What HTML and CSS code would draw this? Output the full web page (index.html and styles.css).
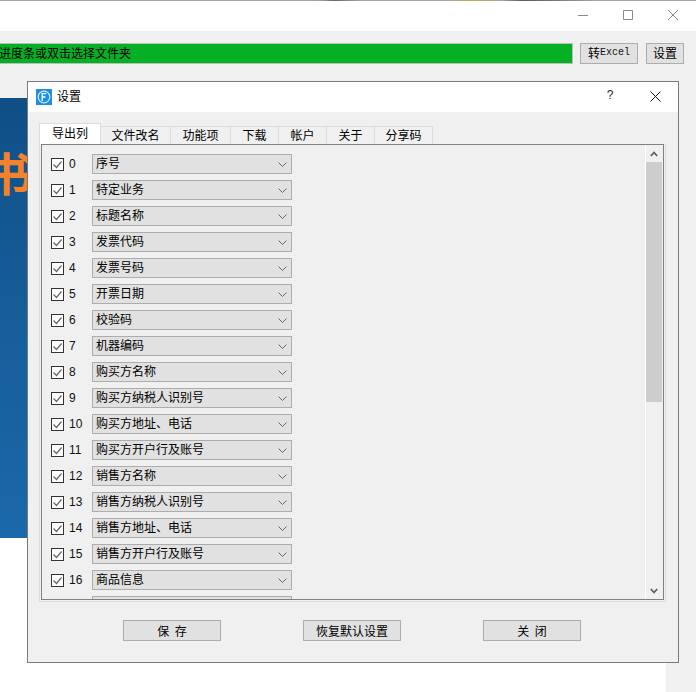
FILE: index.html
```html
<!DOCTYPE html>
<html lang="zh-CN">
<head>
<meta charset="utf-8">
<title>设置</title>
<link rel="stylesheet" href="styles.css">
</head>
<body>
<div class="app">
  <header class="titlebar">
    <div class="photo-edge"></div>
    <div class="win-controls">
      <svg class="win-icon" viewBox="0 0 10 10"><path d="M0 5.5H10"/></svg>
      <svg class="win-icon" viewBox="0 0 10 10"><path d="M.5.5h9v9h-9z"/></svg>
      <svg class="win-icon" viewBox="0 0 10 10"><path d="M0 0L10 10M10 0L0 10"/></svg>
    </div>
  </header>
  <div class="toolbar">
    <div class="progress"><span class="progress-text">进度条或双击选择文件夹</span></div>
    <button class="btn btn-excel">转<span class="latin">Excel</span></button>
    <button class="btn btn-set">设置</button>
  </div>
  <div class="stage">
    <div class="banner"><span class="banner-text">书</span></div>
  </div>
</div>

<section class="dialog">
  <div class="dlg-title">
    <svg class="dlg-logo" viewBox="0 0 16 16">
      <rect width="16" height="16" fill="#1a8fe8"/>
      <circle cx="8" cy="8" r="5.8" fill="none" stroke="#d8ecfb" stroke-width="1.2"/>
      <path d="M6.2 12V4.6h4M6.2 8h3.2" fill="none" stroke="#fff" stroke-width="1.3"/>
    </svg>
    <span class="dlg-name">设置</span>
    <span class="dlg-help">?</span>
    <svg class="dlg-close" viewBox="0 0 11 11"><path d="M.5.5L10.5 10.5M10.5.5L.5 10.5"/></svg>
  </div>
  <div class="dlg-body">
    <nav class="tabs">
      <div class="tab active">导出列</div>
      <div class="tab t-w">文件改名</div>
      <div class="tab t-m">功能项</div>
      <div class="tab t-s">下载</div>
      <div class="tab t-s">帐户</div>
      <div class="tab t-s">关于</div>
      <div class="tab t-m2">分享码</div>
    </nav>
    <div class="pane-frame">
      <div class="pane">
        <div class="rows">
          <div class="row"><span class="cb"><svg viewBox="0 0 13 13"><path d="M2.5 6.5l3 3 5-6"/></svg></span><span class="num">0</span><div class="select">序号<svg class="chev" viewBox="0 0 9 5"><path d="M.5.5l4 4 4-4"/></svg></div></div>
          <div class="row"><span class="cb"><svg viewBox="0 0 13 13"><path d="M2.5 6.5l3 3 5-6"/></svg></span><span class="num">1</span><div class="select">特定业务<svg class="chev" viewBox="0 0 9 5"><path d="M.5.5l4 4 4-4"/></svg></div></div>
          <div class="row"><span class="cb"><svg viewBox="0 0 13 13"><path d="M2.5 6.5l3 3 5-6"/></svg></span><span class="num">2</span><div class="select">标题名称<svg class="chev" viewBox="0 0 9 5"><path d="M.5.5l4 4 4-4"/></svg></div></div>
          <div class="row"><span class="cb"><svg viewBox="0 0 13 13"><path d="M2.5 6.5l3 3 5-6"/></svg></span><span class="num">3</span><div class="select">发票代码<svg class="chev" viewBox="0 0 9 5"><path d="M.5.5l4 4 4-4"/></svg></div></div>
          <div class="row"><span class="cb"><svg viewBox="0 0 13 13"><path d="M2.5 6.5l3 3 5-6"/></svg></span><span class="num">4</span><div class="select">发票号码<svg class="chev" viewBox="0 0 9 5"><path d="M.5.5l4 4 4-4"/></svg></div></div>
          <div class="row"><span class="cb"><svg viewBox="0 0 13 13"><path d="M2.5 6.5l3 3 5-6"/></svg></span><span class="num">5</span><div class="select">开票日期<svg class="chev" viewBox="0 0 9 5"><path d="M.5.5l4 4 4-4"/></svg></div></div>
          <div class="row"><span class="cb"><svg viewBox="0 0 13 13"><path d="M2.5 6.5l3 3 5-6"/></svg></span><span class="num">6</span><div class="select">校验码<svg class="chev" viewBox="0 0 9 5"><path d="M.5.5l4 4 4-4"/></svg></div></div>
          <div class="row"><span class="cb"><svg viewBox="0 0 13 13"><path d="M2.5 6.5l3 3 5-6"/></svg></span><span class="num">7</span><div class="select">机器编码<svg class="chev" viewBox="0 0 9 5"><path d="M.5.5l4 4 4-4"/></svg></div></div>
          <div class="row"><span class="cb"><svg viewBox="0 0 13 13"><path d="M2.5 6.5l3 3 5-6"/></svg></span><span class="num">8</span><div class="select">购买方名称<svg class="chev" viewBox="0 0 9 5"><path d="M.5.5l4 4 4-4"/></svg></div></div>
          <div class="row"><span class="cb"><svg viewBox="0 0 13 13"><path d="M2.5 6.5l3 3 5-6"/></svg></span><span class="num">9</span><div class="select">购买方纳税人识别号<svg class="chev" viewBox="0 0 9 5"><path d="M.5.5l4 4 4-4"/></svg></div></div>
          <div class="row"><span class="cb"><svg viewBox="0 0 13 13"><path d="M2.5 6.5l3 3 5-6"/></svg></span><span class="num">10</span><div class="select">购买方地址、电话<svg class="chev" viewBox="0 0 9 5"><path d="M.5.5l4 4 4-4"/></svg></div></div>
          <div class="row"><span class="cb"><svg viewBox="0 0 13 13"><path d="M2.5 6.5l3 3 5-6"/></svg></span><span class="num">11</span><div class="select">购买方开户行及账号<svg class="chev" viewBox="0 0 9 5"><path d="M.5.5l4 4 4-4"/></svg></div></div>
          <div class="row"><span class="cb"><svg viewBox="0 0 13 13"><path d="M2.5 6.5l3 3 5-6"/></svg></span><span class="num">12</span><div class="select">销售方名称<svg class="chev" viewBox="0 0 9 5"><path d="M.5.5l4 4 4-4"/></svg></div></div>
          <div class="row"><span class="cb"><svg viewBox="0 0 13 13"><path d="M2.5 6.5l3 3 5-6"/></svg></span><span class="num">13</span><div class="select">销售方纳税人识别号<svg class="chev" viewBox="0 0 9 5"><path d="M.5.5l4 4 4-4"/></svg></div></div>
          <div class="row"><span class="cb"><svg viewBox="0 0 13 13"><path d="M2.5 6.5l3 3 5-6"/></svg></span><span class="num">14</span><div class="select">销售方地址、电话<svg class="chev" viewBox="0 0 9 5"><path d="M.5.5l4 4 4-4"/></svg></div></div>
          <div class="row"><span class="cb"><svg viewBox="0 0 13 13"><path d="M2.5 6.5l3 3 5-6"/></svg></span><span class="num">15</span><div class="select">销售方开户行及账号<svg class="chev" viewBox="0 0 9 5"><path d="M.5.5l4 4 4-4"/></svg></div></div>
          <div class="row"><span class="cb"><svg viewBox="0 0 13 13"><path d="M2.5 6.5l3 3 5-6"/></svg></span><span class="num">16</span><div class="select">商品信息<svg class="chev" viewBox="0 0 9 5"><path d="M.5.5l4 4 4-4"/></svg></div></div>
          <div class="row"><span class="cb"></span><span class="num"></span><div class="select"></div></div>
        </div>
        <div class="scrollbar">
          <svg class="sb-arrow" viewBox="0 0 8 6"><path d="M.8 5L4 1.5 7.2 5"/></svg>
          <div class="sb-track"><div class="sb-thumb"></div></div>
          <svg class="sb-arrow" viewBox="0 0 8 6"><path d="M.8 1L4 4.5 7.2 1"/></svg>
        </div>
      </div>
    </div>
    <div class="dlg-actions">
      <button class="btn act act-spaced">保 存</button>
      <button class="btn act">恢复默认设置</button>
      <button class="btn act act-spaced">关 闭</button>
    </div>
  </div>
</section>
</body>
</html>
```

FILE: styles.css
```css
* { box-sizing: border-box; }
html, body { margin: 0; padding: 0; }
body {
  width: 696px; height: 692px; overflow: hidden; position: relative;
  font: 12px/16px "Noto Sans CJK SC", "Liberation Sans", sans-serif;
  color: #000; background: #f0f0f0;
}
.app { height: 692px; display: flex; flex-direction: column; }
.titlebar { height: 31px; background: #fff; position: relative; }
.photo-edge {
  height: 1px;
  background: linear-gradient(90deg, #a6a6a6 0 44%, #a59f90 46%, #6f6a60 48%, #a6a6a6 52%, #a3a7ad 58%, #a6a6a6 64%, #c2aa62 67%, #b9a666 70%, #a6a6a6 72%, #5c5a55 75%, #7e7a70 80%, #a6a6a6 86%, #a6a6a6 100%);
}
.win-controls { position: absolute; right: 18px; top: 10px; display: flex; gap: 35px; }
.win-icon { width: 10px; height: 10px; fill: none; stroke: #8a8a8a; stroke-width: 1; display: block; }
.toolbar { height: 67px; padding-top: 12px; display: flex; align-items: flex-start; background: #f0f0f0; }
.progress {
  width: 573px; height: 21px; background: #06b025;
  border: 1px solid #bcbcbc; border-left: 0;
  line-height: 18px; white-space: nowrap; overflow: hidden;
  margin-right: 7px;
}
.progress-text { margin-left: -1px; display: block; }
.btn {
  font: inherit; color: #000; background: #e1e1e1;
  border: 1px solid #adadad; padding: 0 0 2px; border-radius: 0;
  display: flex; align-items: center; justify-content: center;
}
.btn-excel { width: 58px; height: 21px; margin-right: 8px; }
.btn-set { width: 38px; height: 21px; }
.latin { font: 10px/16px "Liberation Mono", monospace; color: #111; }
.stage { flex: 1; margin-right: 30px; background: #fff; }
.banner {
  height: 440px; width: 40px; position: relative; overflow: hidden;
  background: linear-gradient(180deg, #0f4f86 0%, #165c99 45%, #1b68aa 100%);
}
.banner-text {
  position: absolute; left: -14px; top: 41px;
  font: 700 46px/64px "Noto Sans CJK SC", sans-serif; color: #f5822a;
}
.dialog {
  position: absolute; left: 27px; top: 81px; width: 652px; height: 582px;
  border: 1px solid #7a7a7a; background: #f0f0f0;
  display: flex; flex-direction: column;
}
.dlg-title { height: 30px; background: #fff; display: flex; align-items: center; padding: 0 17px 2px 8px; flex: none; }
.dlg-logo { width: 16px; height: 16px; margin: 2px 5px 0 0; }
.dlg-name { flex: 1; }
.dlg-help { font: 12px/16px "Liberation Mono", monospace; color: #222; margin-right: 36px; }
.dlg-close { width: 11px; height: 11px; fill: none; stroke: #111; stroke-width: 1; }
.dlg-body { flex: 1; padding: 11px 11px 0 11px; display: flex; flex-direction: column; }
.tabs { display: flex; height: 21px; align-items: flex-end; flex: none; }
.tab {
  height: 18px; border: 1px solid #dcdcdc; border-bottom: 0; border-left: 0;
  display: flex; align-items: center; justify-content: center; background: #f0f0f0;
  padding-bottom: 2px;
}
.tab.active { width: 62px; height: 21px; background: #fff; border-left: 1px solid #dcdcdc; padding-bottom: 3px; }
.t-w { width: 70px; }
.t-m { width: 60px; }
.t-s { width: 48px; }
.t-m2 { width: 58px; }
.pane-frame { width: 627px; height: 458px; border: 1px solid #dcdcdc; border-top: 0; padding: 0 1px 1px 1px; flex: none; }
.pane { height: 456px; border: 1px solid #7f7f86; display: flex; overflow: hidden; background: #f0f0f0; }
.rows { flex: 1; padding: 9px 0 0 9px; display: flex; flex-direction: column; gap: 6px; overflow: hidden; }
.row { display: flex; align-items: center; height: 20px; flex: none; }
.cb { width: 13px; height: 13px; border: 1px solid #333; background: #fff; flex: none; margin-right: 5px; position: relative; }
.cb:empty { visibility: hidden; }
.cb svg { position: absolute; left: -1px; top: -1px; width: 13px; height: 13px; fill: none; stroke: #666; stroke-width: 1.2; }
.num { width: 23px; font: 12px/16px "Liberation Sans", sans-serif; color: #111; }
.select {
  width: 200px; height: 20px; background: #e1e1e1; border: 1px solid #adadad;
  padding: 0 4px 2px 3px; display: flex; align-items: center; justify-content: space-between; flex: none;
}
.chev { width: 9px; height: 5px; fill: none; stroke: #666; stroke-width: 1; margin-top: 2px; }
.scrollbar { width: 18px; padding-right: 1px; display: flex; flex-direction: column; align-items: center; background: #f0f0f0; border-left: 1px solid #fff; flex: none; }
.sb-arrow { width: 8px; height: 6px; fill: none; stroke: #606060; stroke-width: 1.8; margin: 6px 0 5px; flex: none; }
.sb-track { flex: 1; width: 100%; }
.sb-thumb { height: 240px; background: #cdcdcd; }
.dlg-actions { display: flex; padding: 18px 0 0 84px; gap: 82px; }
.act { width: 98px; height: 21px; padding-bottom: 0; }
.act-spaced { word-spacing: 3px; }
```
